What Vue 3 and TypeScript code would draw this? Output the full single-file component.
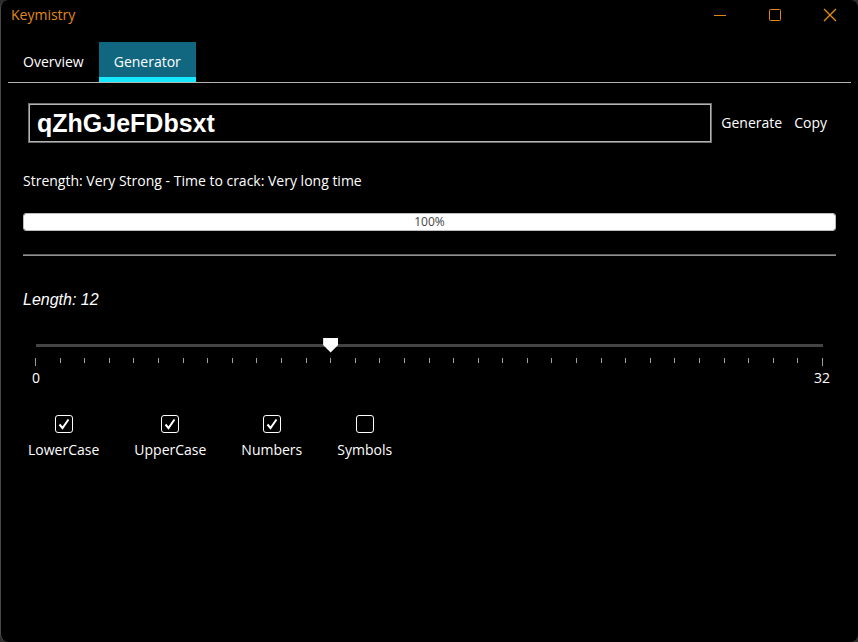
<script setup lang="ts">
import { computed, reactive, ref } from 'vue'

interface CharacterSet {
  id: string
  label: string
  pool: string
  enabled: boolean
}

const MAX_LENGTH = 32
const tabs = ['Overview', 'Generator']
const activeTab = ref('Generator')
const password = ref('qZhGJeFDbsxt')
const length = ref(12)
const strength = ref(100)

const sets = reactive<CharacterSet[]>([
  { id: 'lower', label: 'LowerCase', pool: 'abcdefghijklmnopqrstuvwxyz', enabled: true },
  { id: 'upper', label: 'UpperCase', pool: 'ABCDEFGHIJKLMNOPQRSTUVWXYZ', enabled: true },
  { id: 'numbers', label: 'Numbers', pool: '0123456789', enabled: true },
  { id: 'symbols', label: 'Symbols', pool: '!@#$%^&*()-_=+', enabled: false },
])

const pool = computed(() => sets.filter((s) => s.enabled).map((s) => s.pool).join(''))

function generate(): void {
  const chars = pool.value
  if (!chars) return
  password.value = Array.from(
    { length: length.value },
    () => chars[Math.floor(Math.random() * chars.length)],
  ).join('')
}

function copy(): void {
  navigator.clipboard?.writeText(password.value)
}
</script>

<template>
  <div class="window">
    <header class="titlebar">
      <span class="title">Keymistry</span>
      <div class="controls">
        <button type="button" aria-label="Minimize">
          <svg width="14" height="14" viewBox="0 0 14 14"><path d="M1 7.5h12" /></svg>
        </button>
        <button type="button" aria-label="Maximize">
          <svg width="14" height="14" viewBox="0 0 14 14">
            <rect x="1.5" y="1.5" width="11" height="11" rx="1" />
          </svg>
        </button>
        <button type="button" aria-label="Close">
          <svg width="14" height="14" viewBox="0 0 14 14">
            <path d="M1 1l12 12M13 1L1 13" stroke-width="1.4" />
          </svg>
        </button>
      </div>
    </header>

    <nav class="tabs" role="tablist">
      <button
        v-for="tab in tabs"
        :key="tab"
        type="button"
        role="tab"
        class="tab"
        :class="{ active: tab === activeTab }"
        :aria-selected="tab === activeTab"
        @click="activeTab = tab"
      >
        {{ tab }}
      </button>
    </nav>

    <main class="panel">
      <div class="password-row">
        <input v-model="password" class="password" type="text" aria-label="Password" spellcheck="false" />
        <button type="button" class="action" @click="generate">Generate</button>
        <button type="button" class="action" @click="copy">Copy</button>
      </div>

      <p class="strength">Strength: Very Strong - Time to crack: Very long time</p>
      <div class="progress" role="progressbar" :aria-valuenow="strength" aria-label="Strength">
        <div class="fill" :style="{ width: strength + '%' }"></div>
        <span class="percent">{{ strength }}%</span>
      </div>
      <hr class="separator" />

      <label class="length" for="length">Length: {{ length }}</label>
      <div class="slider">
        <input id="length" v-model.number="length" class="range" type="range" min="0" :max="MAX_LENGTH" />
        <div class="ticks" aria-hidden="true">
          <span v-for="n in MAX_LENGTH + 1" :key="n" class="tick"></span>
        </div>
        <div class="scale">
          <span>0</span>
          <span>{{ MAX_LENGTH }}</span>
        </div>
      </div>

      <div class="options">
        <label v-for="set in sets" :key="set.id" class="option" :for="set.id">
          <span class="check">
            <input :id="set.id" v-model="set.enabled" type="checkbox" />
            <svg v-if="set.enabled" class="mark" width="18" height="18" viewBox="0 0 18 18" aria-hidden="true">
              <path d="M4.5 9.5l3 3.5L13.5 4.5" />
            </svg>
          </span>
          {{ set.label }}
        </label>
      </div>
    </main>
  </div>
</template>

<style>
body {
  background: #2c2c2c;
}
</style>

<style scoped>
.window {
  box-sizing: border-box;
  min-height: 100vh;
  border-left: 1px solid #484848;
  border-radius: 8px;
  background: #000;
  color: #fff;
  font-family: "Open Sans", "Noto Sans", sans-serif;
  font-size: 14px;
  line-height: 20px;
}

button {
  margin: 0;
  padding: 0;
  border: 0;
  background: none;
  color: inherit;
  font: inherit;
}

.titlebar {
  display: flex;
  align-items: center;
  justify-content: space-between;
  height: 30px;
  padding: 0 1px 0 10px;
  color: #e08a1e;
}

.controls {
  display: flex;
}

.controls button {
  display: flex;
  align-items: center;
  justify-content: center;
  width: 55px;
  height: 30px;
}

.controls svg {
  fill: none;
  stroke: #e08a1e;
}

.tabs {
  display: flex;
  margin: 12px 7px 0;
  border-bottom: 1px solid #b4b4b4;
}

.tab {
  height: 40px;
  padding: 4px 15px 0;
  border-bottom: 5px solid transparent;
}

.tab.active {
  border-bottom-color: #16e8ff;
  background: #10677f;
}

.panel {
  padding: 20px 22px 24px;
}

.password-row {
  display: flex;
  align-items: center;
  padding: 0 3px 0 5px;
}

.password {
  box-sizing: border-box;
  flex: 1;
  min-width: 0;
  height: 40px;
  margin: 0 3px 0 0;
  padding: 0 8px;
  border: 1px solid #6e6e6e;
  box-shadow: inset 0 0 0 1px #b4b4b4;
  background: #000;
  color: #fff;
  font: bold 25px "Liberation Sans", Arial, sans-serif;
  outline: none;
}

.action {
  padding: 4px 6px;
}

.strength {
  margin: 28px 0 22px;
}

.progress {
  position: relative;
  box-sizing: border-box;
  height: 18px;
  overflow: hidden;
  border: 1px solid #bcbcbc;
  border-radius: 3px;
}

.fill {
  height: 100%;
  background: #fff;
}

.percent {
  position: absolute;
  inset: 0;
  color: #444;
  font-size: 12px;
  line-height: 16px;
  text-align: center;
}

.separator {
  box-sizing: border-box;
  height: 2px;
  margin: 23px 0 34px;
  border: 0;
  border-top: 1px solid #606060;
  background: #909090;
}

.length {
  display: block;
  font: italic 16px/20px "Liberation Sans", Arial, sans-serif;
}

.slider {
  margin: 27px 6px 0 5px;
}

.range {
  display: block;
  width: 100%;
  height: 16px;
  margin: 0;
  appearance: none;
  background: linear-gradient(#444, #444) center / calc(100% - 15px) 3px no-repeat;
  outline: none;
}

.range::-webkit-slider-thumb {
  width: 15px;
  height: 15px;
  appearance: none;
  background: #fff;
  clip-path: polygon(0 0, 100% 0, 100% 50%, 50% 100%, 0 50%);
}

.ticks {
  display: flex;
  justify-content: space-between;
  height: 8px;
  padding: 0 7px;
  margin-top: 5px;
}

.tick {
  width: 1px;
  height: 5px;
  background: #a0a0a0;
}

.tick:first-child,
.tick:last-child {
  height: 8px;
}

.scale {
  display: flex;
  justify-content: space-between;
  margin-top: 2px;
}

.scale span {
  width: 16px;
  text-align: center;
}

.options {
  display: flex;
  gap: 35px;
  margin: 27px 5px 0;
}

.option {
  display: flex;
  flex-direction: column;
  align-items: center;
  gap: 7px;
}

.check {
  position: relative;
  width: 18px;
  height: 18px;
}

.check input {
  display: block;
  box-sizing: border-box;
  width: 18px;
  height: 18px;
  margin: 0;
  appearance: none;
  border: 1px solid #fff;
  border-radius: 3px;
}

.mark {
  position: absolute;
  inset: 0;
  fill: none;
  stroke: #fff;
  stroke-width: 2;
  pointer-events: none;
}
</style>
